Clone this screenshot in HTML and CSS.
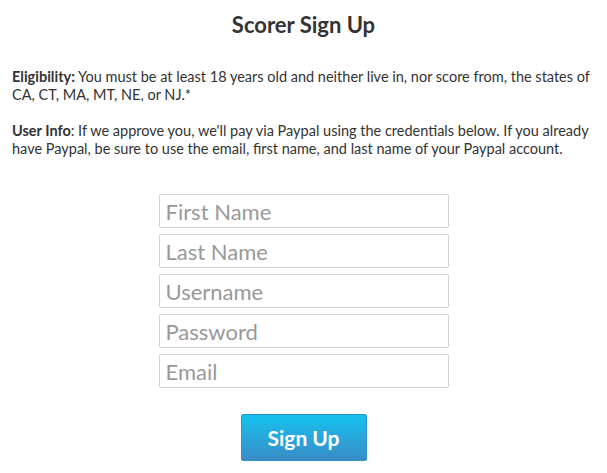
FILE: index.html
```html
<!DOCTYPE html>
<html>
<head>
<meta charset="utf-8">
<link rel="stylesheet" href="styles.css">
</head>
<body>
<div class="page">
  <h1 class="title">Scorer Sign Up</h1>
  <p class="info"><b>Eligibility:</b> You must be at least 18 years old and neither live in, nor score from, the states of CA, CT, MA, MT, NE, or NJ.*</p>
  <p class="info"><b>User Info</b>: If we approve you, we'll pay via Paypal using the credentials below. If you already have Paypal, be sure to use the email, first name, and last name of your Paypal account.</p>
  <form class="form">
    <input class="field" type="text" placeholder="First Name">
    <input class="field" type="text" placeholder="Last Name">
    <input class="field" type="text" placeholder="Username">
    <input class="field" type="password" placeholder="Password">
    <input class="field" type="text" placeholder="Email">
    <button class="btn" type="button">Sign Up</button>
  </form>
</div>
</body>
</html>
```
FILE: styles.css
```css
html, body {
  margin: 0;
  padding: 0;
  background: #fff;
}
body {
  font-family: Lato, "Open Sans", sans-serif;
  color: #333;
}
.page {
  padding: 12px 12px 0 12px;
}
.title {
  margin: 0;
  text-align: center;
  font-size: 22px;
  font-weight: 700;
  line-height: 26px;
  color: #333;
}
.info {
  margin: 30px 0 0 0;
  font-size: 14.5px;
  line-height: 18px;
}
.info + .info {
  margin-top: 18px;
}
.form {
  display: flex;
  flex-direction: column;
  align-items: center;
  gap: 6px;
  margin-top: 36px;
}
.field {
  box-sizing: border-box;
  width: 290px;
  height: 34px;
  margin: 0;
  padding: 0 6px;
  border: 1px solid #d2d2d2;
  border-radius: 2px;
  font-family: Lato, sans-serif;
  font-size: 22px;
  color: #333;
  outline: none;
}
.field::placeholder {
  color: #999;
}
.btn {
  box-sizing: border-box;
  margin-top: 20px;
  width: 126px;
  height: 47px;
  border: 1px solid #2f8fc7;
  border-radius: 2px;
  background: linear-gradient(#14c2ef, #3a8cc6);
  color: #fff;
  font-family: Lato, sans-serif;
  font-weight: 700;
  font-size: 21px;
  padding: 0;
}
```
